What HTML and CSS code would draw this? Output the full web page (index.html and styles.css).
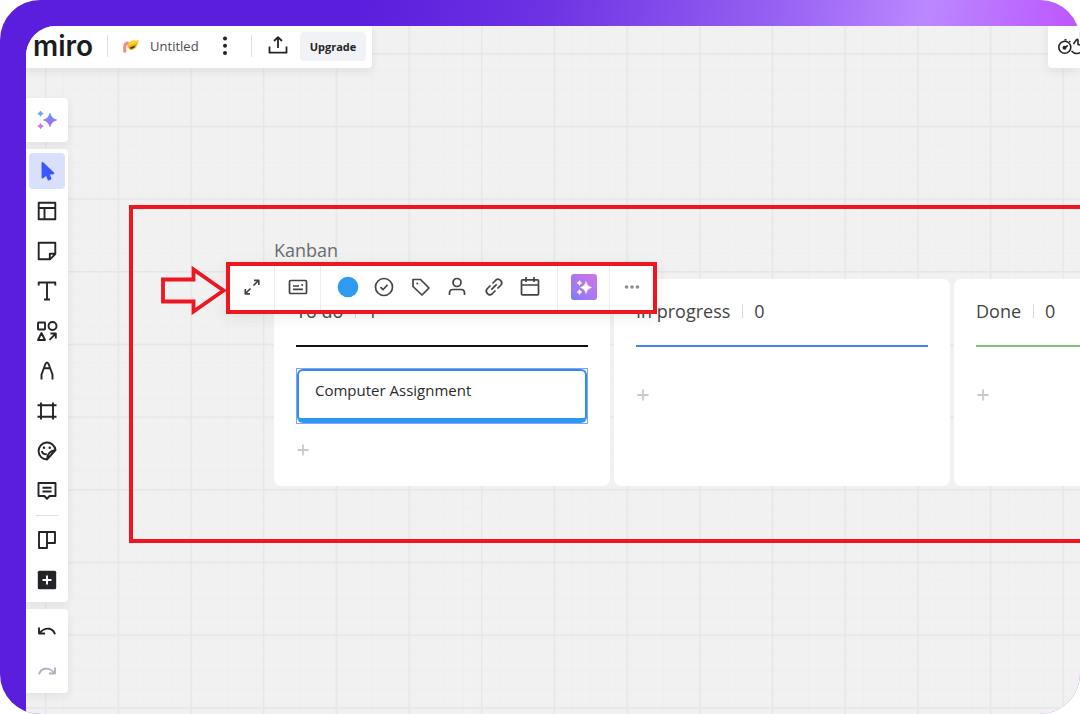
FILE: index.html
```html
<!DOCTYPE html>
<html lang="en">
<head>
<meta charset="utf-8">
<title>Miro board</title>
<link rel="stylesheet" href="styles.css">
</head>
<body>
<div class="frame">
<main class="canvas">
  <svg class="grid" aria-hidden="true">
    <defs>
      <pattern id="minor" width="18.17" height="18.17" patternUnits="userSpaceOnUse" x="19" y="27">
        <path d="M.5 0V19M0 .5H19" stroke="#eeeeee"/>
      </pattern>
      <pattern id="major" width="72.68" height="72.68" patternUnits="userSpaceOnUse" x="19" y="27">
        <path d="M.7 0V73M0 .7H73" stroke="#e6e6e7" stroke-width="1.4"/>
      </pattern>
    </defs>
    <rect width="100%" height="100%" fill="url(#minor)"/>
    <rect width="100%" height="100%" fill="url(#major)"/>
  </svg>

  <section class="board">
    <h1 class="board-title">Kanban</h1>
    <div class="columns">
      <article class="column">
        <h2 class="column-head head-todo"><span>To do</span><span class="count">1</span></h2>
        <div class="list">
          <div class="card-outline"><div class="card">Computer Assignment</div></div>
          <button class="add" aria-label="Add card"><svg viewBox="0 0 14 14"><path d="M7 1.500V12.500M1.500 7H12.500"/></svg></button>
        </div>
      </article>
      <article class="column">
        <h2 class="column-head head-progress"><span>In progress</span><span class="count">0</span></h2>
        <div class="list">
          <button class="add" aria-label="Add card"><svg viewBox="0 0 14 14"><path d="M7 1.500V12.500M1.500 7H12.500"/></svg></button>
        </div>
      </article>
      <article class="column">
        <h2 class="column-head head-done"><span>Done</span><span class="count">0</span></h2>
        <div class="list">
          <button class="add" aria-label="Add card"><svg viewBox="0 0 14 14"><path d="M7 1.500V12.500M1.500 7H12.500"/></svg></button>
        </div>
      </article>
    </div>
  </section>

  <div class="highlight"></div>
  <svg class="arrow" viewBox="0 0 68 50" aria-hidden="true"><path d="M3 14.500H33.500V4.500L63.500 25.500L33.500 46.500V36.500H3Z" fill="none" stroke="#ee1620" stroke-width="3.800"/></svg>

  <div class="context-bar" role="toolbar" aria-label="Card tools">
    <div class="group group-narrow">
      <button class="tool" aria-label="Expand"><svg viewBox="0 0 22 22"><path d="M12.500 9.500L17.500 4.500M13 4.300H17.800V9M9.500 12.500L4.500 17.500M4.300 13V17.800H9"/></svg></button>
    </div>
    <div class="group group-card">
      <button class="tool" aria-label="Card type"><svg viewBox="0 0 22 22"><rect x="2.500" y="4.500" width="17" height="13" rx="1"/><path d="M6 13.300H16M6 10H12"/><circle cx="15.200" cy="9" r="1" class="dot"/></svg></button>
    </div>
    <div class="group group-wide">
      <button class="tool" aria-label="Color"><svg viewBox="0 0 22 22"><circle cx="11" cy="11" r="10.300" fill="#2d9bf0" stroke="none"/></svg></button>
      <button class="tool" aria-label="Status"><svg viewBox="0 0 22 22"><circle cx="11" cy="11" r="8.500"/><path d="M7.500 11.200L10 13.700L14.500 8.700"/></svg></button>
      <button class="tool" aria-label="Tag"><svg viewBox="0 0 22 22"><path d="M3 3.500H10.500L19 12L12 19L3 10.500Z"/><circle cx="7.300" cy="7.600" r="1" class="dot"/></svg></button>
      <button class="tool" aria-label="Assignee"><svg viewBox="0 0 22 22"><circle cx="11" cy="6.500" r="4"/><path d="M3.500 19V17Q3.500 13.500 7 13.500H15Q18.500 13.500 18.500 17V19"/></svg></button>
      <button class="tool" aria-label="Link"><svg viewBox="0 0 22 22"><path d="M8.300 13.700L13.700 8.300M9.500 7.500L13 4C16 1.500 20.500 6 18 9L14.500 12.500M7.500 9.500L4 13C1.500 16 6 20.500 9 18L12.500 14.500"/></svg></button>
      <button class="tool" aria-label="Due date"><svg viewBox="0 0 22 22"><rect x="2.500" y="3.800" width="17" height="15" rx="1"/><path d="M2.500 9H19.500M7 1V6M15 1V6"/></svg></button>
    </div>
    <div class="group group-ai">
      <button class="ai" aria-label="Create with AI"><svg viewBox="0 0 26 26"><defs><linearGradient id="aibg" x1="0" y1="1" x2="1" y2="0"><stop offset="0" stop-color="#6e7aff"/><stop offset=".25" stop-color="#9a7af5"/><stop offset="1" stop-color="#d175e6"/></linearGradient></defs><rect width="26" height="26" rx="3" fill="url(#aibg)"/><path d="M15 7.500Q16 12.500 20.500 13.500Q16 14.500 15 19.500Q14 14.500 9.500 13.500Q14 12.500 15 7.500ZM8.500 6.500L9.400 8.100L11 9L9.400 9.900L8.500 11.500L7.600 9.900L6 9L7.600 8.100ZM8.500 15.500L9.400 17.100L11 18L9.400 18.900L8.500 20.500L7.600 18.900L6 18L7.600 17.100Z" fill="#fff" stroke="#fff" stroke-width=".5"/></svg></button>
    </div>
    <div class="group group-narrow">
      <button class="tool" aria-label="More"><svg viewBox="0 0 22 22" class="more"><circle cx="5.500" cy="11" r="1.800"/><circle cx="11" cy="11" r="1.800"/><circle cx="16.500" cy="11" r="1.800"/></svg></button>
    </div>
  </div>

  <header class="topbar">
    <div class="panel title-panel">
      <a class="brand" href="#">miro</a>
      <span class="rule"></span>
      <div class="doc">
        <svg class="cap" viewBox="0 0 18 18" aria-hidden="true"><path d="M4.500 6.500L10 3.500L17 3.200L15.500 8L6 11Z" fill="#ffd02f"/><path d="M6 9L15.500 6L14 10.500Q10 14.500 7 12Z" fill="#e5ad16"/><path d="M8 10.500L13.500 8.500L11.800 11L8.500 12Z" fill="#3d3412"/><path d="M6.500 6Q3 6 2.700 9.500V15.500" fill="none" stroke="#f58a83" stroke-width="3"/></svg>
        <span class="doc-name">Untitled</span>
      </div>
      <button class="icon-btn" aria-label="Board menu"><svg viewBox="0 0 24 24"><g fill="#222428" stroke="none"><circle cx="12" cy="4.500" r="2"/><circle cx="12" cy="11.700" r="2"/><circle cx="12" cy="18.900" r="2"/></g></svg></button>
      <span class="rule"></span>
      <div class="share">
        <button class="icon-btn" aria-label="Export"><svg viewBox="0 0 24 24"><path d="M3.500 12.500V18.700H20.500V12.500M12 14V3.500M8 7L12 3.200L16 7"/></svg></button>
        <button class="upgrade">Upgrade</button>
      </div>
    </div>
    <div class="panel timer-panel">
      <button class="timer-btn" aria-label="Timer and reactions"><svg viewBox="0 0 30 24"><circle cx="6.800" cy="12.300" r="6"/><path d="M6.500 13L9.800 10.400M6.500 4.800H8.500M11.300 6L12.300 7"/><circle cx="6.500" cy="12.800" r="1.200" fill="#222428"/><path d="M15.500 9L18.500 4.800Q20 3.500 20 6V9.500L24 10.500M13.500 16Q16 18.800 19 18.500Q24 18 24 14"/></svg></button>
    </div>
  </header>

  <nav class="sidebar" aria-label="Tools">
    <div class="panel stack">
      <button class="side" aria-label="AI"><svg viewBox="0 0 24 24"><defs><linearGradient id="spark" x1="0" y1="0" x2="0" y2="1"><stop offset="0" stop-color="#5f91ff"/><stop offset="1" stop-color="#b569e8"/></linearGradient></defs><g stroke-width="1"><path d="M15 5.500Q16.500 11 21.500 12Q16.500 13 15 18.500Q13.500 13 8.500 12Q13.500 11 15 5.500Z" fill="url(#spark)" stroke="url(#spark)"/><path d="M5.500 3L6.400 4.700L8.200 5.600L6.400 6.500L5.500 8.200L4.600 6.500L2.800 5.600L4.600 4.700Z" fill="#6aa6f5" stroke="#6aa6f5"/><path d="M5.500 15.500L6.400 17.200L8.200 18.100L6.400 19L5.500 20.700L4.600 19L2.800 18.100L4.600 17.200Z" fill="#c778e3" stroke="#c778e3"/></g></svg></button>
    </div>
    <div class="panel stack">
      <button class="side active" aria-label="Select"><svg viewBox="0 0 24 24"><path d="M7.500 4V18.500L11.500 15.500L13.500 20.500L15.500 19.700L13.600 14.800L18.300 14.200Z" fill="#3859ff" stroke="#3859ff"/></svg></button>
      <button class="side" aria-label="Templates"><svg viewBox="0 0 24 24"><path d="M3.700 3.700H20.300V20.300H3.700ZM3.700 9H20.300M9.500 9V20"/></svg></button>
      <button class="side" aria-label="Sticky note"><svg viewBox="0 0 24 24"><path d="M3.700 3.700H20.300V15L15 20.300H3.700ZM14.800 20V14.800H20.300"/></svg></button>
      <button class="side" aria-label="Text"><svg viewBox="0 0 24 24"><path d="M3.700 6.500V3.500H20.300V6.500M12 3.500V20.500M9 20.500H15"/></svg></button>
      <button class="side" aria-label="Shapes"><svg viewBox="0 0 24 24"><rect x="3" y="3.500" width="7" height="7" rx=".5"/><circle cx="17.500" cy="7" r="4"/><path d="M6.500 14L10 21H3ZM14.500 20.800L20.500 14.800M15.500 14.500H20.800V19.500"/></svg></button>
      <button class="side" aria-label="Pen"><svg viewBox="0 0 24 24"><path d="M6.500 20.500V15.500L10.200 5.500Q12 1.500 13.800 5.500L17.500 15.500V20.500M9.300 9.300H14.700"/></svg></button>
      <button class="side" aria-label="Frame"><svg viewBox="0 0 24 24"><path d="M6 3.500V20.500M18 3.500V20.500M2.500 6.300H21.500M2.500 17.700H21.500"/></svg></button>
      <button class="side" aria-label="Sticker"><svg viewBox="0 0 24 24"><path d="M12 20.500A8.500 8.500 0 1 1 20.500 11L12 20.500ZM12 20.500Q12 12.500 20.500 11M6.800 12Q7.500 15.500 11.800 15.300"/><circle cx="9" cy="8.800" r="1.200" class="fill"/><circle cx="14.700" cy="8.800" r="1.200" class="fill"/></svg></button>
      <button class="side" aria-label="Comment"><svg viewBox="0 0 24 24"><path d="M3.500 4H20.500V17H14.500L12 19.800L9.500 17H3.500ZM7.500 8.800H16.500M7.500 12.500H16.500"/></svg></button>
      <hr class="side-rule">
      <button class="side" aria-label="Kanban"><svg viewBox="0 0 24 24"><path d="M4 4H12V20H4ZM12 4H20V15H12"/></svg></button>
      <button class="side" aria-label="More apps"><svg viewBox="0 0 24 24"><rect x="2.800" y="2.800" width="18.400" height="18.400" rx="1.500" fill="#222428" stroke="none"/><path d="M12 7.500V16.500M7.500 12H16.500" stroke="#fff"/></svg></button>
    </div>
    <div class="panel stack">
      <button class="side" aria-label="Undo"><svg viewBox="0 0 24 24"><path d="M4 8.500V14.500H10M4.500 14Q9 9 14 9.700Q18.500 10.500 20 15.300"/></svg></button>
      <button class="side disabled" aria-label="Redo"><svg viewBox="0 0 24 24"><path d="M20 8.500V14.500H14M19.500 14Q15 9 10 9.700Q5.500 10.500 4 15.300"/></svg></button>
    </div>
  </nav>
</main>
</div>
</body>
</html>
```
FILE: styles.css
```css
* {
  box-sizing: border-box;
}

body {
  margin: 0;
  background: #fff;
  color: #222428;
  font-family: "Open Sans", "Noto Sans", sans-serif;
}

button {
  display: flex;
  align-items: center;
  justify-content: center;
  padding: 0;
  border: 0;
  background: none;
  font-family: inherit;
  color: inherit;
}

svg {
  display: block;
  fill: none;
  stroke-linejoin: round;
}

.frame {
  display: flex;
  min-height: 100vh;
  padding: 26px 0 0 26px;
  border-radius: 40px;
  overflow: hidden;
  background: linear-gradient(100deg, #5b1edd 30%, #6c32e3 45%, #9862f3 65%, #bb88ff 77%, #bd55ff 90%);
}

.canvas {
  position: relative;
  flex: 1;
  min-width: 0;
  border-top-left-radius: 30px;
  overflow: hidden;
  background: #f1f1f1;
}

.grid {
  position: absolute;
  inset: 0;
  width: 100%;
  height: 100%;
}

.panel {
  border-radius: 0 4px 4px 0;
  background: #fff;
  box-shadow: 0 3px 10px rgba(34, 36, 40, 0.08);
}

/* Top bar */

.topbar {
  position: relative;
  display: flex;
  justify-content: space-between;
}

.title-panel {
  display: flex;
  align-items: center;
  gap: 14px;
  height: 42px;
  padding: 0 6px 2px 7px;
  border-radius: 0 0 4px 0;
}

.brand {
  color: #1c1c1e;
  font-family: Inter, sans-serif;
  font-size: 28px;
  font-weight: 600;
  line-height: 36px;
  text-decoration: none;
}

.rule {
  width: 1px;
  height: 22px;
  background: #dedee3;
}

.doc,
.share {
  display: flex;
  align-items: center;
  gap: 10px;
}

.cap {
  width: 18px;
  height: 18px;
}

.doc-name {
  color: #4a4b50;
  font-size: 13px;
  line-height: 20px;
}

.icon-btn {
  width: 24px;
  height: 24px;
}

.icon-btn svg {
  width: 24px;
  height: 24px;
  stroke: #222428;
  stroke-width: 1.8;
}

.upgrade {
  height: 29px;
  padding: 0 10px;
  border-radius: 4px;
  background: #f1f2f5;
  font-size: 11px;
  font-weight: 700;
}

.timer-panel {
  display: flex;
  align-items: center;
  width: 32px;
  padding-left: 10px;
  border-radius: 0 0 0 4px;
  overflow: hidden;
}

.timer-btn svg {
  width: 30px;
  height: 24px;
  stroke: #222428;
  stroke-width: 1.6;
}

/* Side toolbars */

.sidebar {
  position: relative;
  display: flex;
  flex-direction: column;
  align-items: flex-start;
  gap: 7px;
  margin-top: 30px;
}

.stack {
  display: flex;
  flex-direction: column;
  gap: 4px;
  padding: 4px 3px;
}

.side {
  width: 36px;
  height: 36px;
  border-radius: 4px;
}

.side svg {
  width: 24px;
  height: 24px;
  stroke: #222428;
  stroke-width: 1.9;
}

.side .fill {
  fill: #222428;
  stroke: none;
}

.side.active {
  background: #dadffc;
}

.side.disabled svg {
  stroke: #b0b2c2;
}

.side-rule {
  width: 22px;
  height: 1px;
  margin: 2px auto;
  border: 0;
  background: #dedee3;
}

/* Kanban placed on the free canvas */

.board {
  position: absolute;
  top: 212px;
  left: 248px;
}

.board-title {
  margin: 0 0 17px;
  color: #6b6b6c;
  font-size: 18px;
  font-weight: 400;
  line-height: 24px;
}

.columns {
  display: flex;
  gap: 4px;
}

.column {
  width: 336px;
  padding: 20px 22px 29px;
  border-radius: 7px;
  background: #fff;
}

.column-head {
  display: flex;
  align-items: center;
  gap: 12px;
  margin: 0;
  padding-bottom: 22px;
  border-bottom: 2px solid #111;
  color: #444;
  font-size: 18px;
  font-weight: 400;
  line-height: 24px;
}

.head-progress {
  border-color: #4681ee;
}

.head-done {
  border-color: #85bf7c;
}

.count {
  display: flex;
  align-items: center;
  gap: 11px;
}

.count::before {
  content: "";
  width: 1px;
  height: 14px;
  background: #d9d9d9;
}

.list {
  padding-top: 21px;
}

.card-outline {
  border: 1px solid #8ba0fb;
}

.card {
  padding: 9px 16px 18px;
  border: 2px solid #2d8df0;
  border-bottom: 5px solid #2d9bf0;
  border-radius: 6px;
  color: #2b2b2c;
  font-size: 15px;
  line-height: 20px;
}

.add {
  width: 14px;
  height: 14px;
  margin-top: 20px;
}

.card-outline + .add {
  margin-top: 19px;
}

.add svg {
  width: 14px;
  height: 14px;
  stroke: #c9c9c9;
  stroke-width: 1.8;
}

/* Annotations */

.highlight {
  position: absolute;
  top: 179px;
  right: 0;
  left: 103px;
  height: 338px;
  border: 4px solid #ee1620;
  border-right: 0;
}

.arrow {
  position: absolute;
  top: 239px;
  left: 134px;
  width: 68px;
  height: 50px;
  stroke-linejoin: miter;
}

/* Floating card toolbar */

.context-bar {
  position: absolute;
  top: 236px;
  left: 200px;
  display: flex;
  border: 4px solid #ee1620;
  background: #fff;
  box-shadow: 0 4px 14px rgba(34, 36, 40, 0.08);
}

.group {
  display: flex;
  align-items: center;
  justify-content: center;
  height: 44px;
  padding-bottom: 2px;
}

.group + .group {
  border-left: 1px solid #ececee;
}

.group-narrow {
  width: 44px;
}

.group-card {
  width: 46px;
}

.group-wide {
  justify-content: space-between;
  width: 237px;
  padding: 0 12px 2px;
}

.group-ai {
  width: 52px;
}

.tool {
  width: 30px;
  height: 30px;
}

.tool svg {
  width: 22px;
  height: 22px;
  stroke: #424347;
  stroke-width: 1.7;
}

.tool .dot {
  fill: #424347;
  stroke: none;
}

.tool .more {
  fill: #8e8e90;
  stroke: none;
}

.ai svg {
  width: 26px;
  height: 26px;
}
```
